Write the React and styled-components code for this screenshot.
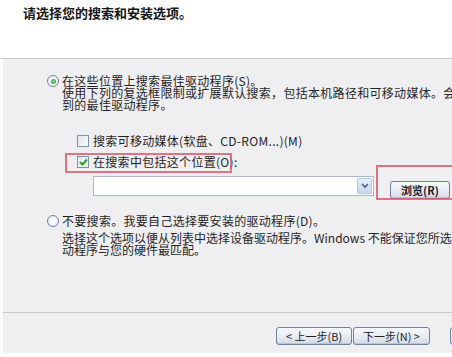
import React from "react";
import styled, { createGlobalStyle } from "styled-components";

const GlobalStyle = createGlobalStyle`
  html, body {
    margin: 0;
    padding: 0;
    background: #fff;
  }
  body {
    width: 452px;
    height: 357px;
    overflow: hidden;
    font-family: "Noto Sans CJK SC", "Liberation Sans", sans-serif;
    color: #222;
  }
`;

const Dialog = styled.div`
  width: 452px;
  height: 357px;
  box-sizing: border-box;
  padding-left: 3px;
  display: flex;
  flex-direction: column;
  background: #fff;
  overflow: hidden;
`;

const Header = styled.div`
  height: 59px;
  box-sizing: border-box;
  margin-left: -3px;
  padding: 5px 0 0 23px;
  border-bottom: 1px solid #c7c7c9;
  background: #fff;
`;

const Title = styled.div`
  font-size: 13px;
  line-height: 15px;
  font-weight: 700;
  color: #151515;
`;

const Body = styled.div`
  height: 254px;
  box-sizing: border-box;
  padding: 15px 0 0 44px;
  background: #efeef0;
  border-bottom: 1px solid #c9c9cb;
  display: flex;
  flex-direction: column;
  white-space: nowrap;
  overflow: hidden;
`;

const OptionRow = styled.div`
  display: flex;
  align-items: center;
  height: 14px;
  margin-top: ${(p) => p.$top || 0}px;
  padding-left: ${(p) => p.$indent || 0}px;
  font-size: 12px;
  line-height: 14px;
  letter-spacing: 0.3px;
  color: #1f1f1f;
  position: relative;
`;

const Radio = styled.span`
  width: 12px;
  height: 12px;
  box-sizing: border-box;
  border-radius: 50%;
  border: 1px solid #6f86a3;
  background: radial-gradient(circle, #fff 0%, #e6e9ee 100%);
  margin-right: 3px;
  display: flex;
  align-items: center;
  justify-content: center;
  flex: none;

  &::after {
    content: "";
    width: 5px;
    height: 5px;
    border-radius: 50%;
    background: ${(p) => (p.$checked ? "radial-gradient(circle, #7fd67f 0%, #2f9a2f 100%)" : "transparent")};
  }
`;

const Box = styled.span`
  width: 12px;
  height: 12px;
  box-sizing: border-box;
  border: 1px solid #7d93ad;
  background: linear-gradient(135deg, #e2e5ea 0%, #fbfbfb 100%);
  margin-right: 4px;
  display: flex;
  align-items: center;
  justify-content: center;
  flex: none;
`;

const Desc = styled.div`
  padding-left: 15px;
  margin-top: ${(p) => p.$top || 0}px;
  font-size: 12px;
  line-height: 12px;
  letter-spacing: ${(p) => p.$spacing || 0}px;
  color: #262626;
`;

const Line = styled.div`
  height: 12px;
`;

const Highlight = styled.span`
  position: absolute;
  left: ${(p) => p.$left}px;
  top: ${(p) => p.$top}px;
  width: ${(p) => p.$w}px;
  height: ${(p) => p.$h}px;
  border: 2px solid rgba(222, 92, 108, 0.85);
  box-sizing: border-box;
  pointer-events: none;
`;

const PathRow = styled.div`
  display: flex;
  align-items: flex-start;
  margin-top: 7px;
  padding-left: 46px;
  height: 20px;
  position: relative;
`;

const Combo = styled.div`
  width: 281px;
  height: 20px;
  box-sizing: border-box;
  border: 1px solid #a9b8cb;
  background: #fff;
  display: flex;
  justify-content: flex-end;
  padding: 1px;
`;

const DropButton = styled.span`
  width: 15px;
  height: 16px;
  box-sizing: border-box;
  border: 1px solid #b8c8e4;
  border-radius: 2px;
  background: linear-gradient(#e7eefa, #c6d6f1);
  display: flex;
  align-items: center;
  justify-content: center;
`;

const BrowseWrap = styled.div`
  position: relative;
  margin-left: 16px;
`;

const Button = styled.button`
  height: 18px;
  width: ${(p) => p.$w}px;
  box-sizing: border-box;
  padding: 0;
  border: 1px solid #6f82a0;
  border-radius: 3px;
  background: linear-gradient(#f7f8fb 0%, #e7ebf2 55%, #d3dbe7 100%);
  box-shadow: inset 0 -1px 0 #b9c6d8;
  font-family: "Noto Sans CJK SC", "Liberation Sans", sans-serif;
  font-size: 11px;
  line-height: 16px;
  font-weight: ${(p) => (p.$bold ? 700 : 400)};
  color: #222;
  white-space: nowrap;
  flex: none;
`;

const Footer = styled.div`
  height: 40px;
  box-sizing: border-box;
  padding: 14px 0 0 273px;
  background: #efeef0;
  display: flex;
  align-items: flex-start;
  gap: 1px;
`;

const Spacer = styled.span`
  width: 18px;
  flex: none;
`;

export default function App() {
  return (
    <>
      <GlobalStyle />
      <Dialog>
        <Header>
          <Title>请选择您的搜索和安装选项。</Title>
        </Header>
        <Body>
          <OptionRow>
            <Radio $checked />
            在这些位置上搜索最佳驱动程序(S)。
          </OptionRow>
          <Desc $top={-1} $spacing={0.3}>
            <Line>使用下列的复选框限制或扩展默认搜索，包括本机路径和可移动媒体。会安装找</Line>
            <Line>到的最佳驱动程序。</Line>
          </Desc>
          <OptionRow $top={23} $indent={30}>
            <Box />
            搜索可移动媒体(软盘、CD-ROM...)(M)
          </OptionRow>
          <OptionRow $top={7} $indent={30}>
            <Box>
              <svg width="9" height="8" viewBox="0 0 9 8">
                <path d="M1 4 L3.5 6.5 L8 1.5" fill="none" stroke="#25a625" strokeWidth="2" />
              </svg>
            </Box>
            在搜索中包括这个位置(O):
            <Highlight $left={18} $top={-2} $w={167} $h={20} />
          </OptionRow>
          <PathRow>
            <Combo>
              <DropButton>
                <svg width="8" height="6" viewBox="0 0 8 6">
                  <path d="M1 1 L4 4 L7 1" fill="none" stroke="#4b5f84" strokeWidth="1.6" />
                </svg>
              </DropButton>
            </Combo>
            <BrowseWrap>
              <Button $w={60} $bold>浏览(R)</Button>
              <Highlight $left={-14} $top={-11} $w={90} $h={35} />
            </BrowseWrap>
          </PathRow>
          <OptionRow $top={18}>
            <Radio />
            不要搜索。我要自己选择要安装的驱动程序(D)。
          </OptionRow>
          <Desc $top={4}>
            <Line>选择这个选项以便从列表中选择设备驱动程序。Windows 不能保证您所选择的驱</Line>
            <Line>动程序与您的硬件最匹配。</Line>
          </Desc>
        </Body>
        <Footer>
          <Button $w={76}>&lt; 上一步(B)</Button>
          <Button $w={77}>下一步(N) &gt;</Button>
          <Spacer />
          <Button $w={75}>取消</Button>
        </Footer>
      </Dialog>
    </>
  );
}
